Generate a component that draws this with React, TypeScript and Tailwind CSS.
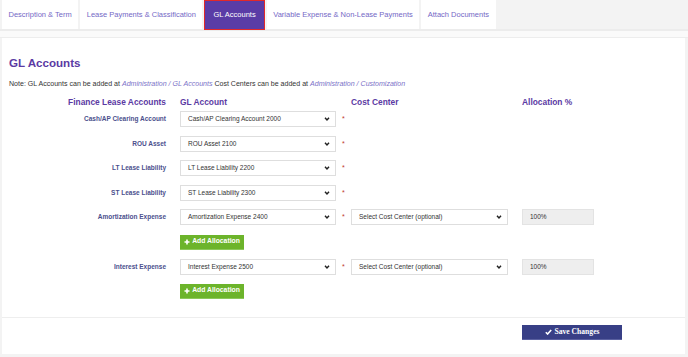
import React from "react";

const Chevron = () => (
  <svg width="6" height="4" viewBox="0 0 8 6" className="shrink-0">
    <path d="M1 1.2 L4 4.4 L7 1.2" fill="none" stroke="#222" strokeWidth="2.2" />
  </svg>
);

const Select = ({ text, w }: { text: string; w: string }) => (
  <div className={`${w} h-[16px] border border-[#dedede] bg-white flex items-center justify-between pl-[7px] pr-[5px] text-[6.5px] text-[#333]`}>
    <span className="whitespace-nowrap">{text}</span>
    <Chevron />
  </div>
);

const AddBtn = () => (
  <div className="ml-[171px] w-[64px] h-[15px] bg-[#6cb42b] border-b border-[#8cc85a] flex items-center justify-center gap-[2px] text-white font-bold text-[6.8px]">
    <svg width="6" height="6" viewBox="0 0 6 6">
      <path d="M3 0.5 V5.5 M0.5 3 H5.5" stroke="#fff" strokeWidth="1.6" />
    </svg>
    <span>Add Allocation</span>
  </div>
);

type Row = { label: string; value: string; alloc?: boolean };

const rows: Row[] = [
  { label: "Cash/AP Clearing Account", value: "Cash/AP Clearing Account 2000" },
  { label: "ROU Asset", value: "ROU Asset 2100" },
  { label: "LT Lease Liability", value: "LT Lease Liability 2200" },
  { label: "ST Lease Liability", value: "ST Lease Liability 2300" },
  { label: "Amortization Expense", value: "Amortization Expense 2400", alloc: true },
  { label: "Interest Expense", value: "Interest Expense 2500", alloc: true },
];

const FormRow = ({ r }: { r: Row }) => (
  <div className="flex items-center h-[16px]">
    <div className="w-[157px] text-right font-bold text-[6.5px] text-[#4b4f8d] whitespace-nowrap">{r.label}</div>
    <div className="w-[14px]" />
    <Select text={r.value} w="w-[156px]" />
    <div className="w-[15px] pl-[6px] text-[7px] text-[#c0392b] leading-none -mt-[1px]">*</div>
    {r.alloc && (
      <>
        <Select text="Select Cost Center (optional)" w="w-[157px]" />
        <div className="w-[14px]" />
        <div className="w-[72px] h-[16px] bg-[#eeeeee] border border-[#e3e3e3] flex items-center pl-[7px] text-[6.5px] text-[#333]">100%</div>
      </>
    )}
  </div>
);

const tabs = [
  "Description & Term",
  "Lease Payments & Classification",
  "GL Accounts",
  "Variable Expense & Non-Lease Payments",
  "Attach Documents",
];

export default function App() {
  return (
    <div className="w-[688px] h-[357px] bg-[#f3f3f3] overflow-hidden font-['Liberation_Sans',Arial,sans-serif]">
      <div className="flex h-[29px] pl-[2px] gap-[2px]">
        {tabs.map((t) =>
          t === "GL Accounts" ? (
            <div key={t} className="h-[30px] px-[8px] flex items-center bg-[#5a3ca6] border border-[#e0282a] text-white text-[7.5px] whitespace-nowrap">
              {t}
            </div>
          ) : (
            <div key={t} className="h-[29px] px-[6.5px] flex items-center bg-white text-[#7468c6] text-[7.5px] whitespace-nowrap">
              {t}
            </div>
          )
        )}
      </div>
      <div className="h-[2px] bg-[#ececec]" />
      <div className="h-[6px] bg-[#fafafa]" />
      <div className="h-[1px] bg-[#ededed]" />
      <div className="ml-[2px] w-[683px] bg-white">
        <div className="px-[7px] pt-[18px] pb-[18.5px]">
          <div className="h-[14px] leading-[14px] text-[11.6px] font-bold text-[#5b3aa3]">GL Accounts</div>
          <div className="mt-[9px] h-[10px] leading-[10px] text-[7.05px] text-[#333] whitespace-nowrap">
            Note: GL Accounts can be added at{" "}
            <span className="italic text-[#7b72c8]">Administration / GL Accounts</span> Cost Centers can be added at{" "}
            <span className="italic text-[#7b72c8]">Administration / Customization</span>
          </div>
          <div className="mt-[7px] h-[12px] flex items-center font-bold text-[8.4px] text-[#5b3aa3]">
            <div className="w-[157px] text-right whitespace-nowrap">Finance Lease Accounts</div>
            <div className="w-[14px]" />
            <div className="w-[171px]">GL Account</div>
            <div className="w-[171px]">Cost Center</div>
            <div>Allocation %</div>
          </div>
          <div className="mt-[3px] flex flex-col gap-[8.5px]">
            <FormRow r={rows[0]} />
            <FormRow r={rows[1]} />
            <FormRow r={rows[2]} />
            <FormRow r={rows[3]} />
            <FormRow r={rows[4]} />
            <div className="mt-[1px]">
              <AddBtn />
            </div>
            <div className="mt-[1px]">
              <FormRow r={rows[5]} />
            </div>
            <AddBtn />
          </div>
        </div>
        <div className="h-[1px] bg-[#eeeeee]" />
        <div className="pt-[7px] pb-[14px] pl-[520px]">
          <div className="w-[100px] h-[15px] bg-[#383f86] border-b border-[#5a60a0] flex items-center justify-center gap-[3px] text-white font-bold text-[7.6px] font-['Liberation_Serif',serif]">
            <svg width="7" height="6" viewBox="0 0 7 6">
              <path d="M0.8 3.2 L2.6 5 L6.2 1" fill="none" stroke="#fff" strokeWidth="1.6" />
            </svg>
            <span>Save Changes</span>
          </div>
        </div>
      </div>
    </div>
  );
}
